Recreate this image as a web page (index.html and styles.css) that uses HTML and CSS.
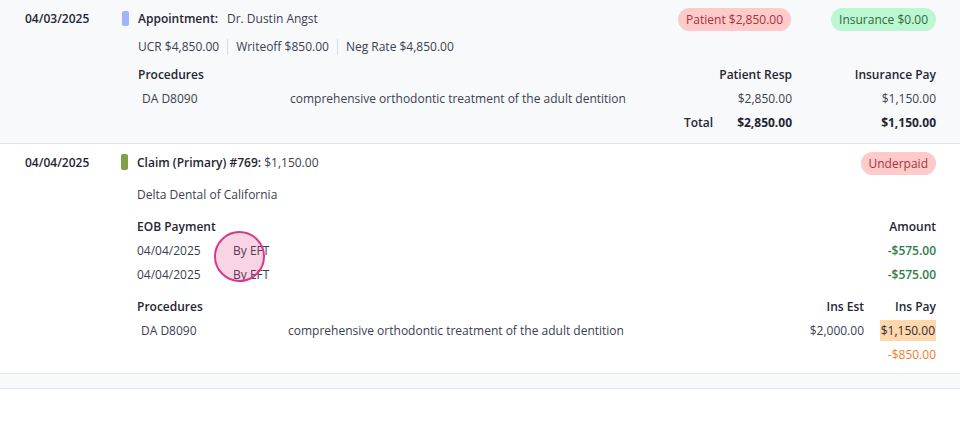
FILE: index.html
```html
<!DOCTYPE html>
<html lang="en">
<head>
  <meta charset="UTF-8">
  <title>Ledger</title>
  <link rel="stylesheet" href="styles.css">
</head>
<body>

  <div class="entry shaded">
    <div class="date">04/03/2025</div>
    <div class="marker appt"></div>
    <div class="body">
      <div class="head">
        <div class="title"><b>Appointment:</b><span class="who">Dr. Dustin Angst</span></div>
        <div class="pills">
          <span class="pill red">Patient $2,850.00</span>
          <span class="pill green">Insurance $0.00</span>
        </div>
      </div>
      <div class="stats">
        <span>UCR $4,850.00</span>
        <span>Writeoff $850.00</span>
        <span>Neg Rate $4,850.00</span>
      </div>
      <div class="table appt-table">
        <div class="th">Procedures</div>
        <div></div>
        <div class="th num">Patient Resp</div>
        <div class="th num">Insurance Pay</div>

        <div class="code">DA D8090</div>
        <div>comprehensive orthodontic treatment of the adult dentition</div>
        <div class="num">$2,850.00</div>
        <div class="num">$1,150.00</div>
      </div>
      <div class="total">
        <span class="total-label">Total</span>
        <span class="sum">$2,850.00</span>
        <span class="sum num wide">$1,150.00</span>
      </div>
    </div>
  </div>

  <div class="entry claim-entry">
    <div class="date">04/04/2025</div>
    <div class="marker claim"></div>
    <div class="body">
      <div class="head">
        <div class="title"><b>Claim (Primary) #769:</b> $1,150.00</div>
        <div class="pills">
          <span class="pill red">Underpaid</span>
        </div>
      </div>
      <div class="line gap">Delta Dental of California</div>

      <div class="table eob gap">
        <div class="th">EOB Payment</div>
        <div></div>
        <div class="th num">Amount</div>

        <div>04/04/2025</div>
        <div>By EFT</div>
        <div class="num paid">-$575.00</div>

        <div>04/04/2025</div>
        <div>By EFT</div>
        <div class="num paid">-$575.00</div>
      </div>

      <div class="table proc gap">
        <div class="th">Procedures</div>
        <div></div>
        <div class="th num">Ins Est</div>
        <div class="th num">Ins Pay</div>

        <div class="code">DA D8090</div>
        <div>comprehensive orthodontic treatment of the adult dentition</div>
        <div class="num">$2,000.00</div>
        <div class="num"><span class="hl">$1,150.00</span></div>

        <div></div>
        <div></div>
        <div></div>
        <div class="num diff">-$850.00</div>
      </div>
    </div>
  </div>

  <div class="strip"></div>

  <div class="click-dot"></div>

</body>
</html>
```

FILE: styles.css
```css
body {
  margin: 0;
  font-family: "Open Sans", "Liberation Sans", sans-serif;
  font-size: 12px;
  line-height: 24px;
  color: #3a4150;
  background: #fff;
}

b, .th {
  font-weight: 600;
  color: #1f2633;
}

.entry {
  display: flex;
  padding: 7px 24px 6px 25px;
  border-bottom: 1px solid #e1e5ee;
}

.entry.shaded {
  background: #f8f9fb;
  padding-bottom: 8px;
}

.date {
  width: 97px;
  font-weight: 600;
  color: #1f2633;
}

.marker {
  width: 7px;
  height: 15px;
  margin-top: 4px;
  margin-right: 9px;
  border-radius: 2px;
}

.marker.appt { background: #a3b3fb; }
.marker.claim { background: #7f9f4a; margin-top: 3px; height: 16px; margin-left: -1px; }

.body {
  flex: 1;
  white-space: nowrap;
}

.who {
  margin-left: 9px;
}

.head {
  display: flex;
  justify-content: space-between;
  align-items: center;
}

.pills {
  display: flex;
  gap: 40px;
}

.pill {
  display: inline-block;
  height: 23px;
  line-height: 23px;
  padding: 0 8px;
  border-radius: 12px;
}

.pill.red { background: #fecaca; color: #a8323a; }
.pill.green { background: #bbf7d0; color: #2f6a48; }

.stats {
  margin-top: 4px;
  display: flex;
}

.stats span {
  padding: 0 8px;
  border-left: 1px solid #d7dbe3;
  line-height: 16px;
  margin: 4px 0;
}

.stats span:first-child {
  padding-left: 0;
  border-left: none;
}

.table {
  display: grid;
}

.appt-table {
  margin-top: 4px;
  grid-template-columns: 152px 1fr 144px 144px;
}

.proc {
  grid-template-columns: 151px 1fr 72px 72px;
}

.eob {
  grid-template-columns: 96px 1fr 120px;
}

.code {
  padding-left: 4px;
}

.num {
  text-align: right;
}

.total {
  display: flex;
  justify-content: flex-end;
}

.total-label {
  font-weight: 600;
  color: #1f2633;
  margin-right: 24px;
}

.sum {
  font-weight: 700;
  color: #1f2633;
}

.wide {
  width: 144px;
}

.gap {
  margin-top: 8px;
}

.paid {
  color: #2e7d46;
  font-weight: 600;
}

.diff {
  color: #f47a2c;
}

.hl {
  background: #fed7aa;
  padding: 2px 1px;
  color: #2a2f38;
}

.strip {
  height: 14px;
  background: #f8f9fb;
  border-bottom: 1px solid #e1e5ee;
}

.click-dot {
  position: absolute;
  left: 214px;
  top: 231px;
  width: 47px;
  height: 47px;
  border-radius: 50%;
  border: 2px solid #d9388a;
  background: rgba(219, 39, 119, 0.2);
}
```
